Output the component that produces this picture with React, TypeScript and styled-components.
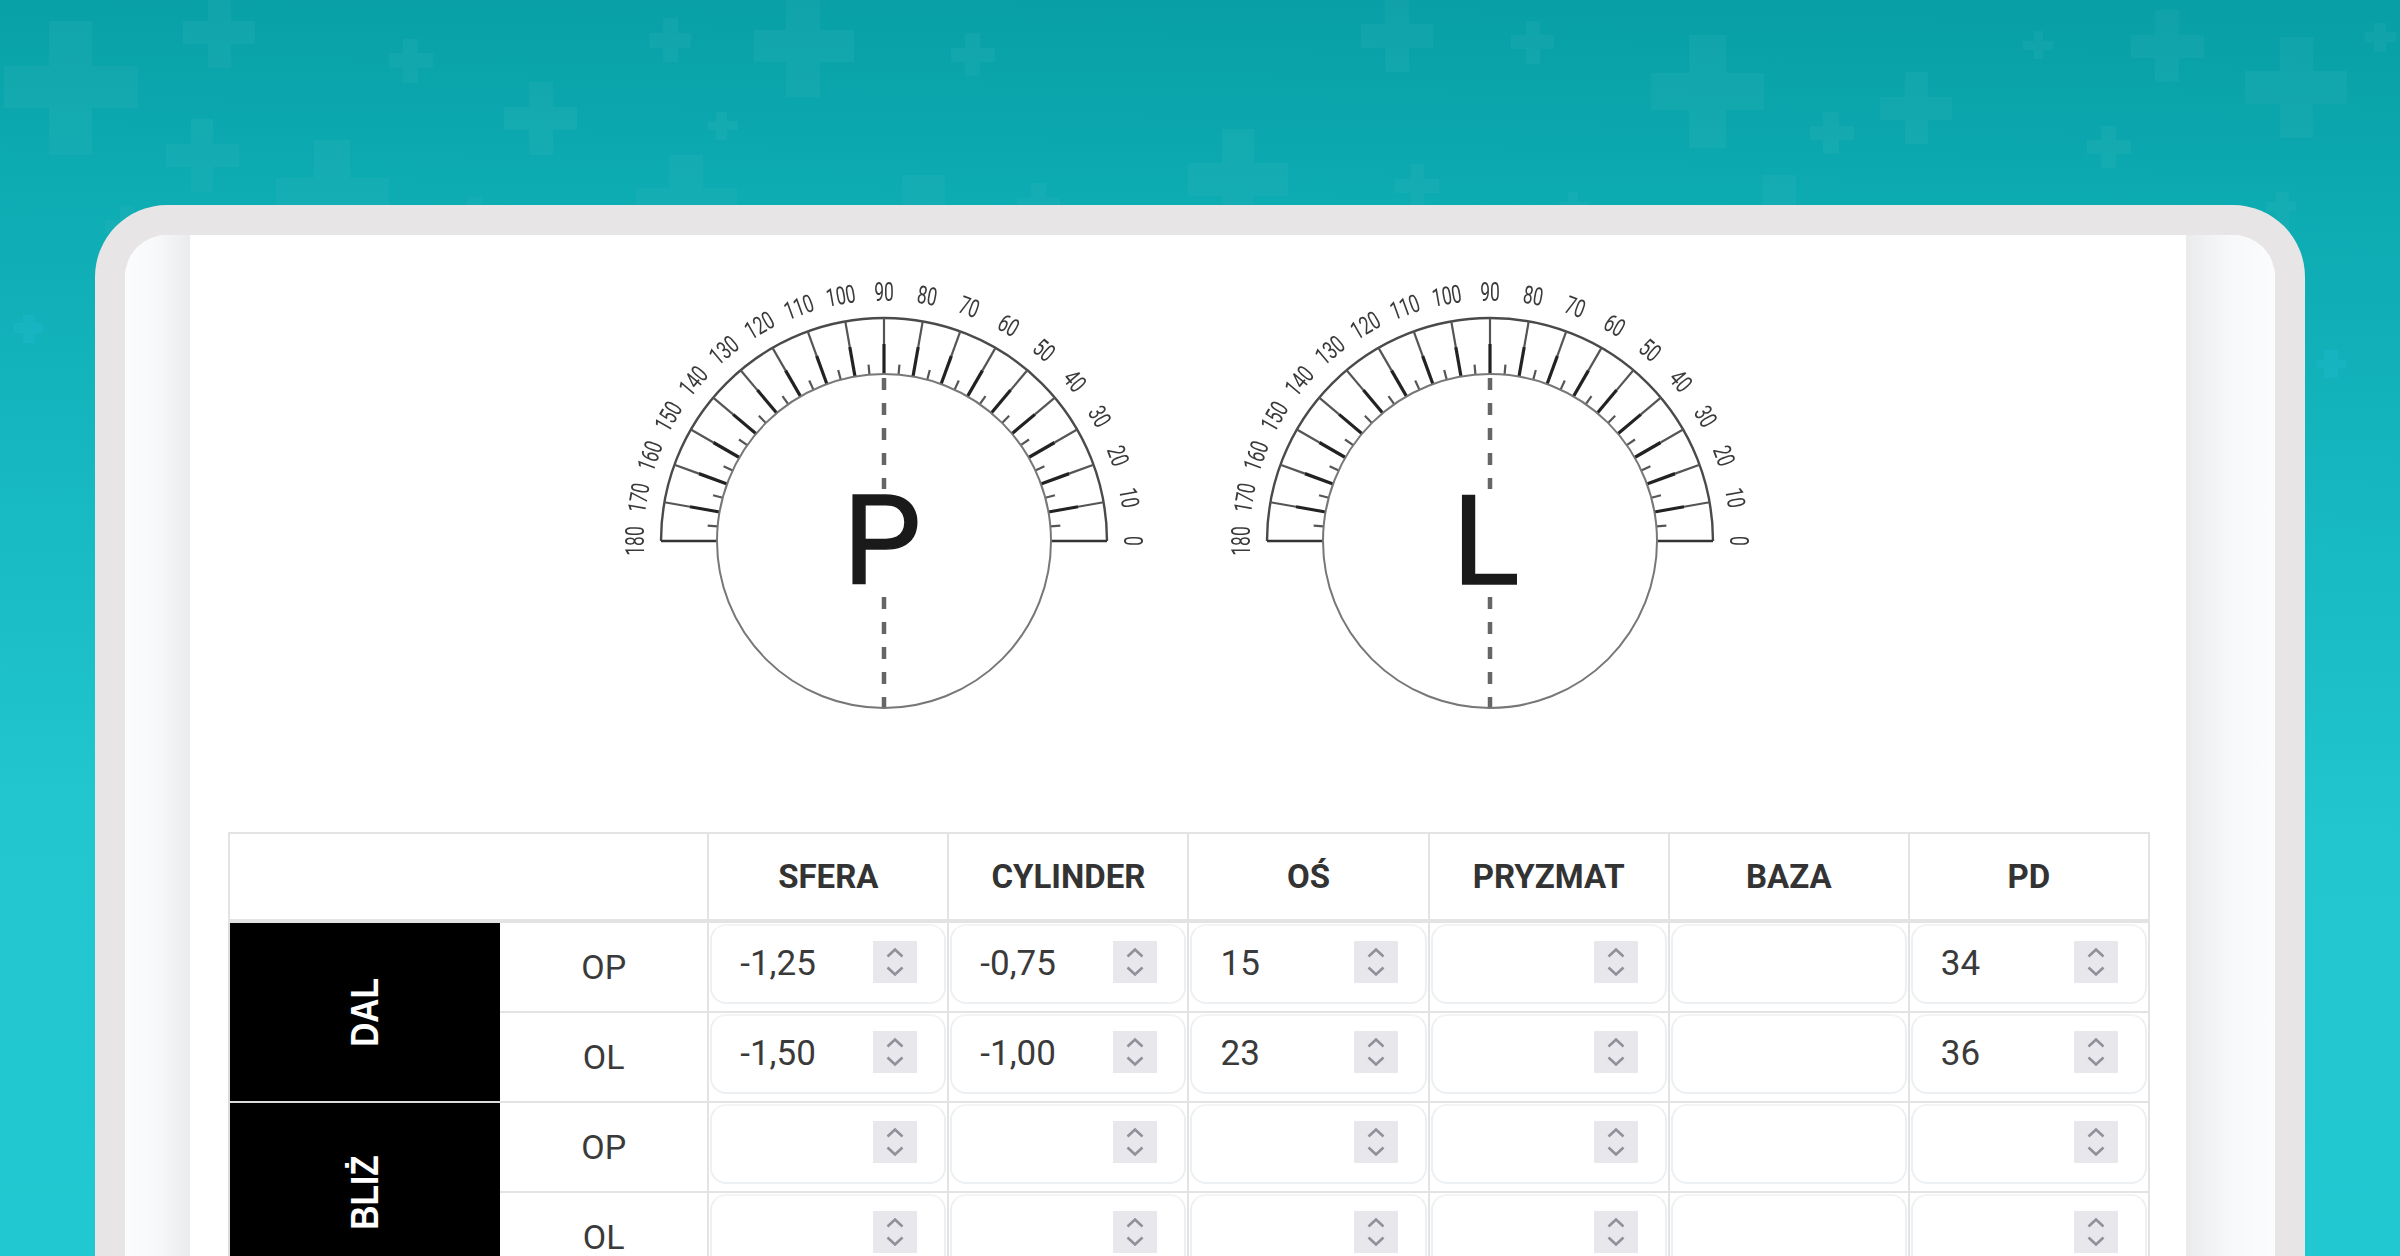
import React from "react";
import styled, { createGlobalStyle } from "styled-components";

const GlobalStyle = createGlobalStyle`
  html, body {
    margin: 0;
    padding: 0;
    background: #22c7d0;
  }
  body {
    font-family: Roboto, "Liberation Sans", sans-serif;
  }
`;

// vertical bar x1,x2,y1,y2 and horizontal bar x1,x2,y1,y2
const CROSSES: number[][] = [
  [49, 92, 21, 155, 4, 138, 66, 108],
  [208, 231, -5, 68, 183, 255, 21, 44],
  [403, 418, 39, 83, 389, 433, 53, 68],
  [529, 553, 82, 155, 504, 577, 107, 130],
  [663, 678, 18, 62, 649, 691, 33, 48],
  [786, 820, -5, 97, 754, 854, 30, 62],
  [716, 727, 112, 140, 708, 738, 121, 130],
  [191, 213, 119, 192, 166, 239, 144, 167],
  [314, 350, 140, 290, 276, 389, 178, 232],
  [669, 703, 155, 300, 636, 737, 188, 240],
  [467, 482, 197, 240, 453, 496, 212, 226],
  [120, 134, 206, 250, 105, 149, 220, 233],
  [23, 35, 315, 343, 14, 43, 323, 333],
  [965, 980, 33, 76, 951, 995, 48, 62],
  [1385, 1409, -5, 72, 1361, 1433, 24, 48],
  [1526, 1540, 21, 64, 1511, 1554, 35, 49],
  [1222, 1254, 129, 230, 1188, 1288, 163, 196],
  [1411, 1424, 164, 208, 1395, 1439, 179, 193],
  [902, 945, 175, 300, 860, 990, 215, 260],
  [1031, 1046, 183, 240, 1017, 1060, 198, 212],
  [1568, 1578, 192, 240, 1559, 1588, 202, 212],
  [1689, 1726, 35, 148, 1651, 1764, 73, 110],
  [1905, 1928, 72, 144, 1880, 1952, 97, 120],
  [1823, 1839, 112, 154, 1810, 1854, 126, 140],
  [2034, 2043, 31, 59, 2023, 2053, 41, 50],
  [2155, 2179, 10, 82, 2131, 2204, 35, 58],
  [2280, 2313, 37, 138, 2245, 2347, 71, 104],
  [2101, 2116, 126, 168, 2087, 2131, 140, 154],
  [1763, 1796, 175, 290, 1730, 1830, 215, 250],
  [2374, 2386, 23, 52, 2365, 2396, 32, 42],
  [2276, 2289, 192, 240, 2266, 2296, 202, 211],
  [2324, 2338, 350, 378, 2317, 2346, 360, 368],
];

const crossPath = ([a, b, c, d, e, f, g, h]: number[]) =>
  `M${a} ${c}H${b}V${g}H${f}V${h}H${b}V${d}H${a}V${h}H${e}V${g}H${a}Z`;

const Page = styled.div`
  position: relative;
  height: 100vh;
  overflow: hidden;
  background: linear-gradient(181deg, #089ea5 0%, #0dabb2 17%, #17b9c2 42%, #21c6cf 65%, #22c8d1 100%);
  padding: 205px 95px 0;
  box-sizing: border-box;
`;

const Pattern = styled.svg`
  position: absolute;
  left: 0;
  top: 0;
  width: 2400px;
  height: 1256px;
`;

const Frame = styled.div`
  position: relative;
  display: grid;
  grid-template-columns: 65px 1996px 89px;
  border: 30px solid #e7e5e6;
  border-bottom: 0;
  border-radius: 72px 72px 0 0;
  overflow: hidden;
  background: #fff;
`;

const Gutter = styled.div<{ $side: "left" | "right" }>`
  background: linear-gradient(
    ${(p) => (p.$side === "left" ? "to right" : "to left")},
    #fafcfd 0%,
    #f6f8f9 50%,
    #e9ebed 100%
  );
`;

const Panel = styled.main`
  background: #fff;
  padding: 40px 36px 40px 38px;
`;

const Dials = styled.div`
  display: flex;
  justify-content: center;
  gap: 46px;
  padding-right: 4px;
  height: 557px;
`;

const DialSvg = styled.svg`
  width: 560px;
  height: 440px;
  filter: blur(0.6px);
`;

const DialLabel = styled.text`
  font-family: Roboto, sans-serif;
  font-size: 25px;
  fill: #3a3a3a;
  text-anchor: middle;
  dominant-baseline: middle;
`;

const DialLetter = styled.text`
  font-family: Roboto, sans-serif;
  font-size: 124px;
  fill: #1a1a1a;
  stroke: #1a1a1a;
  stroke-width: 1.6px;
  text-anchor: middle;
`;

const CX = 280;
const CY = 266;
const polar = (r: number, deg: number) => {
  const t = (deg * Math.PI) / 180;
  return { x: CX + r * Math.cos(t), y: CY - r * Math.sin(t) };
};

const Dial = ({ letter, shift }: { letter: string; shift: number }) => {
  const labels = [];
  const ticks = [];
  for (let d = 0; d <= 180; d += 10) {
    const p = polar(247, d);
    labels.push(
      <DialLabel key={d} transform={`translate(${p.x} ${p.y}) rotate(${90 - d}) scale(0.7 1)`}>
        {d}
      </DialLabel>
    );
    if (d > 0 && d < 180) {
      const a = polar(223, d);
      const b = polar(197, d);
      const c = polar(167, d);
      ticks.push(
        <g key={d}>
          <line x1={a.x} y1={a.y} x2={b.x} y2={b.y} stroke="#555" strokeWidth={2.2} />
          <line x1={b.x} y1={b.y} x2={c.x} y2={c.y} stroke="#222" strokeWidth={3.2} />
        </g>
      );
    }
  }
  for (let d = 5; d < 180; d += 10) {
    const a = polar(167, d);
    const b = polar(177, d);
    ticks.push(<line key={`m${d}`} x1={a.x} y1={a.y} x2={b.x} y2={b.y} stroke="#555" strokeWidth={2.2} />);
  }
  return (
    <DialSvg viewBox="0 0 560 440">
      {labels}
      <path d={`M${CX - 223} ${CY}A223 223 0 0 1 ${CX + 223} ${CY}`} fill="none" stroke="#4a4a4a" strokeWidth={2.4} />
      <path d={`M${CX - 223} ${CY}H${CX - 167}M${CX + 167} ${CY}H${CX + 223}`} stroke="#333" strokeWidth={2.4} />
      {ticks}
      <circle cx={CX} cy={CY} r={167} fill="none" stroke="#777" strokeWidth={2} />
      <path d={`M${CX} ${CY - 167}V${CY - 52}`} stroke="#666" strokeWidth={4.5} strokeDasharray="12 13" strokeDashoffset={-4} />
      <path d={`M${CX} ${CY + 56}V${CY + 166}`} stroke="#666" strokeWidth={4.5} strokeDasharray="12 13" />
      <DialLetter x={CX + shift} y={CY + 43}>{letter}</DialLetter>
    </DialSvg>
  );
};

const Table = styled.table`
  width: 1922px;
  table-layout: fixed;
  border-collapse: collapse;
  font-family: Roboto, sans-serif;
  color: #3a3a3a;
`;

const HeadCell = styled.th`
  height: 88px;
  padding: 0;
  box-sizing: border-box;
  border: 2px solid #e3e3e3;
  border-bottom: 4px solid #e3e3e3;
  font-size: 33px;
  font-weight: 700;
  text-align: center;
  color: #333;
`;

const GroupCell = styled.td`
  padding: 0;
  background: #000;
  border: 2px solid #dcdcdc;
  border-right: 0;
  text-align: center;
`;

const GroupText = styled.span`
  display: inline-block;
  transform: rotate(-90deg) scaleX(0.88);
  font-family: "Liberation Sans", sans-serif;
  font-size: 38px;
  font-weight: 700;
  color: #fff;
  white-space: nowrap;
`;

const EyeCell = styled.td`
  height: 88px;
  padding: 0;
  border: 2px solid #e3e3e3;
  border-left: 0;
  font-size: 34px;
  text-align: center;
  color: #3a3a3a;
`;

const FieldCell = styled.td`
  height: 80px;
  padding: 1px 1px 7px;
  border: 2px solid #e3e3e3;
  vertical-align: top;
  box-sizing: content-box;
`;

const Field = styled.div`
  display: flex;
  align-items: center;
  justify-content: space-between;
  height: 80px;
  box-sizing: border-box;
  padding: 0 27px 4px 28px;
  border: 2px solid #edf0f3;
  border-top-color: #f3f4f6;
  border-radius: 16px;
  background: #fff;
  font-size: 35px;
  color: #3a3a3a;
`;

const Value = styled.span`
  padding-top: 2px;
`;

const Spinner = styled.svg`
  width: 44px;
  height: 42px;
  flex: none;
  background: #e8e8ec;
`;

const Spin = () => (
  <Spinner viewBox="0 0 44 42">
    <path d="M14.5 15.5L22 8.5L29.5 15.5M14.5 26.5L22 33.5L29.5 26.5" fill="none" stroke="#8f909a" strokeWidth={2.6} />
  </Spinner>
);

const COLUMNS = ["SFERA", "CYLINDER", "OŚ", "PRYZMAT", "BAZA", "PD"];

type Row = { group?: string; eye: string; values: string[] };

const ROWS: Row[] = [
  { group: "DAL", eye: "OP", values: ["-1,25", "-0,75", "15", "", "", "34"] },
  { eye: "OL", values: ["-1,50", "-1,00", "23", "", "", "36"] },
  { group: "BLIŻ", eye: "OP", values: ["", "", "", "", "", ""] },
  { eye: "OL", values: ["", "", "", "", "", ""] },
];

export default function App() {
  return (
    <>
      <GlobalStyle />
      <Page>
        <Pattern viewBox="0 0 2400 1256">
          {CROSSES.map((c, i) => (
            <path key={i} d={crossPath(c)} fill={c[2] > 300 ? "#1fb9d0" : "#ffffff"} fillOpacity={c[2] > 300 ? 0.35 : 0.035} />
          ))}
        </Pattern>
        <Frame>
          <Gutter $side="left" />
          <Panel>
            <Dials>
              <Dial letter="P" shift={-2} />
              <Dial letter="L" shift={-4} />
            </Dials>
            <Table>
              <colgroup>
                <col style={{ width: 271 }} />
                <col style={{ width: 208 }} />
                {COLUMNS.map((c) => (
                  <col key={c} style={{ width: 240 }} />
                ))}
              </colgroup>
              <thead>
                <tr>
                  <HeadCell colSpan={2} />
                  {COLUMNS.map((c) => (
                    <HeadCell key={c}>{c}</HeadCell>
                  ))}
                </tr>
              </thead>
              <tbody>
                {ROWS.map((row, r) => (
                  <tr key={r}>
                    {row.group && (
                      <GroupCell rowSpan={2}>
                        <GroupText>{row.group}</GroupText>
                      </GroupCell>
                    )}
                    <EyeCell>{row.eye}</EyeCell>
                    {row.values.map((v, i) => (
                      <FieldCell key={i}>
                        <Field>
                          <Value>{v}</Value>
                          {COLUMNS[i] !== "BAZA" && <Spin />}
                        </Field>
                      </FieldCell>
                    ))}
                  </tr>
                ))}
              </tbody>
            </Table>
          </Panel>
          <Gutter $side="right" />
        </Frame>
      </Page>
    </>
  );
}
